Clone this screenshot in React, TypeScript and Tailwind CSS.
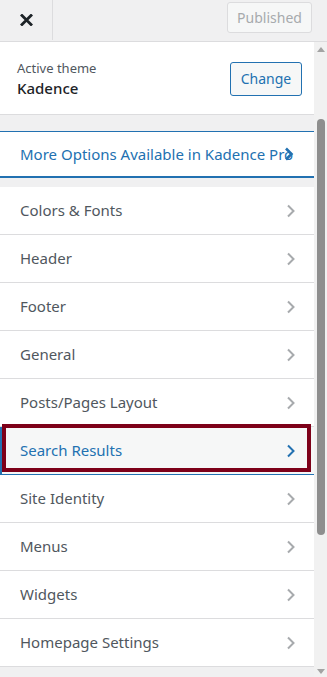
import React from "react";

const items = [
  "Colors & Fonts",
  "Header",
  "Footer",
  "General",
  "Posts/Pages Layout",
  "Search Results",
  "Site Identity",
  "Menus",
  "Widgets",
  "Homepage Settings",
];

function Chevron({ color, bold }: { color: string; bold?: boolean }) {
  return (
    <svg width="10" height="14" viewBox="0 0 10 14" className="shrink-0">
      <path d="M2 1.5 L7.5 7 L2 12.5" fill="none" stroke={color} strokeWidth={bold ? 2.6 : 2} strokeLinecap="butt" />
    </svg>
  );
}

export default function App() {
  return (
    <div
      className="relative w-[327px] h-[677px] overflow-hidden bg-[#f0f0f1] flex flex-col"
      style={{ fontFamily: '"Noto Sans", "Open Sans", sans-serif' }}
    >
      {/* top bar */}
      <div className="h-[42px] shrink-0 flex border-b border-[#dcdcde] bg-[#f0f0f1]">
        <div className="w-[53px] flex items-center justify-center border-r border-[#dcdcde] h-[40px]">
          <svg width="13" height="12" viewBox="0 0 13 12">
            <path d="M1 0.5 L12 11.5 M12 0.5 L1 11.5" stroke="#1d2327" strokeWidth="2.8" />
          </svg>
        </div>
        <div className="flex-1" />
        <div className="pt-[2px] pr-[15px]">
          <div className="w-[85px] h-[31px] rounded-[3px] border border-[#dcdcde] bg-[#f6f7f7] text-[#a7aaad] text-[14px] flex items-center justify-center">
            Published
          </div>
        </div>
      </div>

      <div className="flex flex-1 min-h-0">
        {/* main */}
        <div className="w-[314px] flex flex-col">
          <div className="h-[73px] shrink-0 bg-white border-b border-[#dcdcde] flex items-center justify-between pl-[17px] pr-[12px]">
            <div className="flex flex-col leading-[20px]">
              <span className="text-[13px] text-[#50575e]">Active theme</span>
              <span className="text-[15px] font-medium text-[#1d2327]">Kadence</span>
            </div>
            <div className="w-[72px] h-[34px] rounded-[3px] border border-[#2271b1] bg-[#f6f7f7] text-[#2271b1] text-[14px] flex items-center justify-center mt-[1px]">
              Change
            </div>
          </div>
          <div className="h-[16px] shrink-0" />
          <div className="h-[47px] shrink-0 bg-white border-t border-b-2 border-[#2271b1] flex items-center pl-[20px] pr-[17px]">
            <span className="text-[15px] text-[#2271b1] whitespace-nowrap">More Options Available in Kadence Pro</span>
            <span className="-ml-[9px]">
              <Chevron color="#2271b1" bold />
            </span>
          </div>
          <div className="h-[9px] shrink-0" />
          <div className="flex flex-col bg-white">
            {items.map((it) => {
              const active = it === "Search Results";
              return (
                <div
                  key={it}
                  className={
                    active
                      ? "h-[48px] flex items-center justify-between pl-[20px] pr-[18px] bg-[#f6f7f7] border-l-2 border-b border-[#2271b1]"
                      : "h-[48px] flex items-center justify-between pl-[20px] pr-[18px] border-b border-[#dcdcde]"
                  }
                >
                  <span
                    className={
                      active
                        ? "text-[15px] text-[#2271b1] -ml-[2px]"
                        : "text-[15px] text-[#50575e]"
                    }
                  >
                    {it}
                  </span>
                  <Chevron color={active ? "#2271b1" : "#a7aaad"} />
                </div>
              );
            })}
          </div>
        </div>
        {/* scrollbar */}
        <div className="w-[13px] bg-[#f1f1f1] flex flex-col items-center relative">
          <svg width="8" height="5" viewBox="0 0 8 5" className="mt-[5px]">
            <path d="M0 5 L4 0 L8 5 Z" fill="#a3a3a3" />
          </svg>
          <div className="absolute left-[3px] top-[77px] w-[8px] h-[416px] rounded-[4px] bg-[#8e8e8e]" />
          <div className="flex-1" />
          <svg width="8" height="5" viewBox="0 0 8 5" className="mb-[3px]">
            <path d="M0 0 L4 5 L8 0 Z" fill="#a3a3a3" />
          </svg>
        </div>
      </div>

      {/* highlight annotation */}
      <div className="absolute left-[2px] top-[424px] w-[309px] h-[48px] border-4 border-[#7d0019] pointer-events-none" />
    </div>
  );
}
